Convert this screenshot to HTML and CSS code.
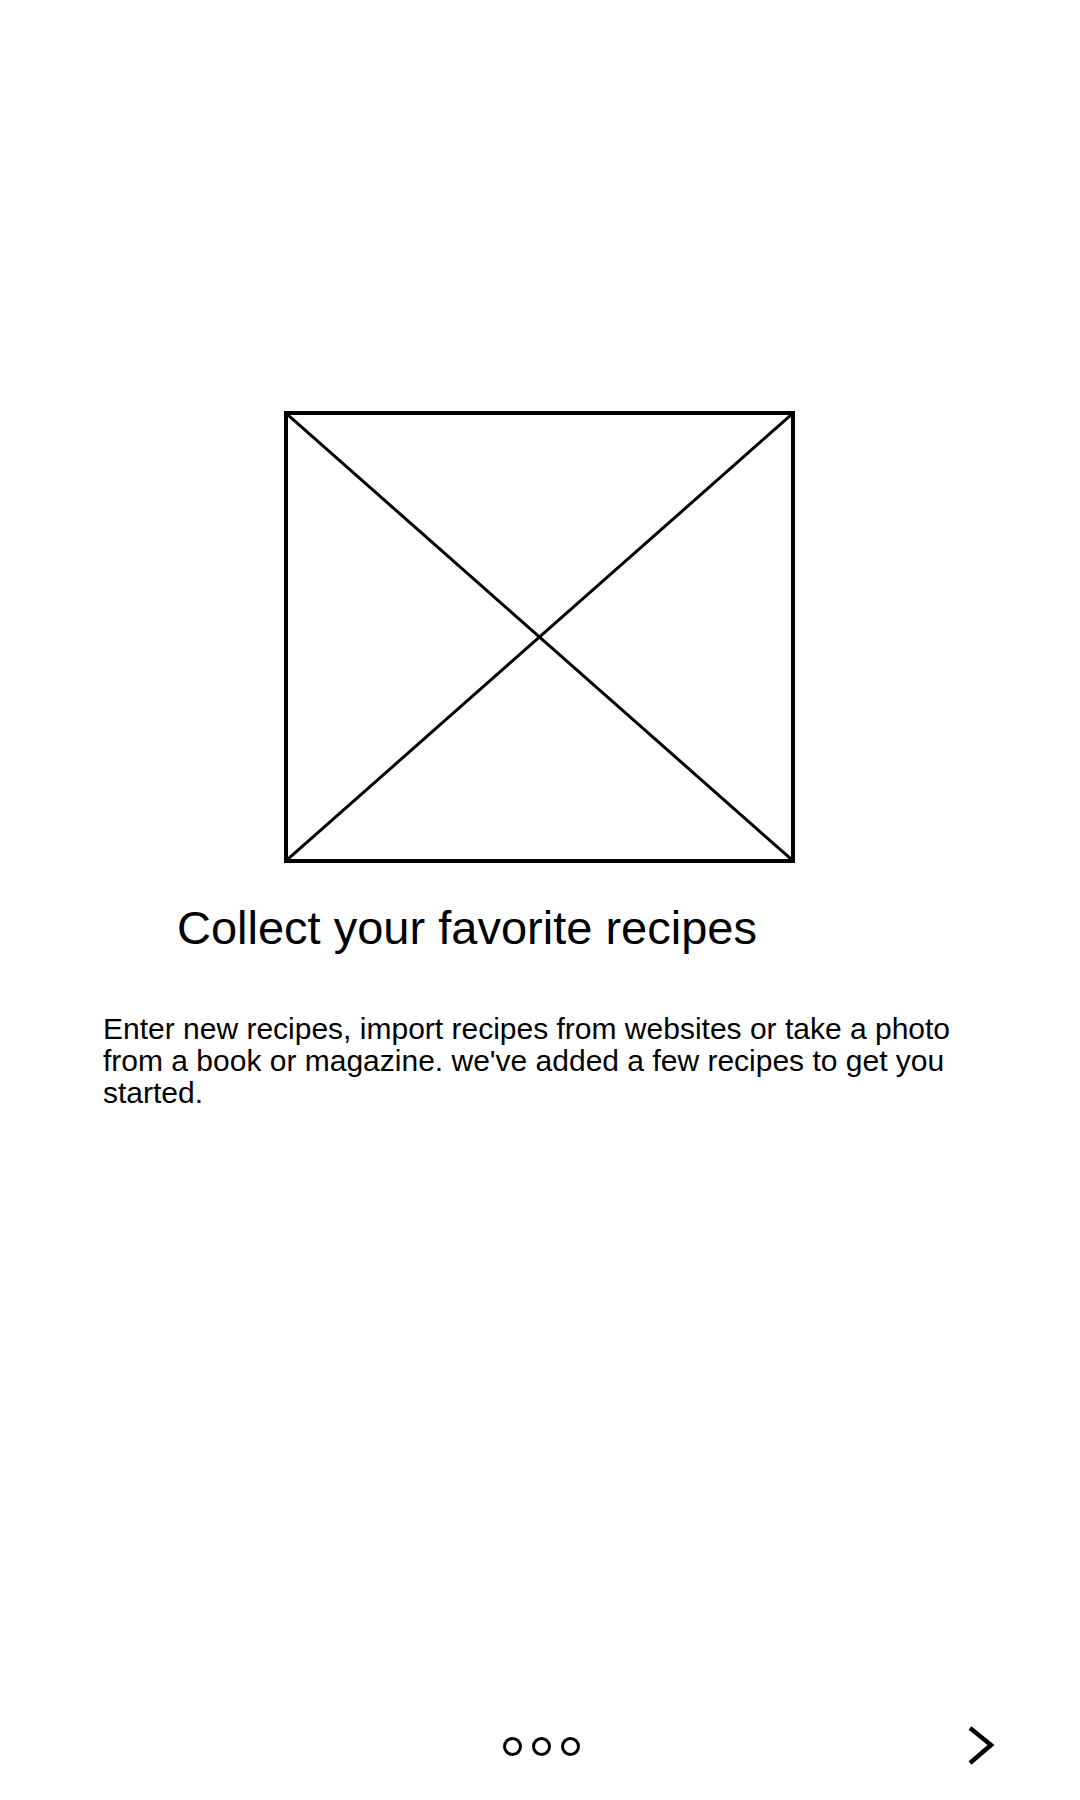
FILE: index.html
```html
<!DOCTYPE html>
<html lang="en">
<head>
<meta charset="utf-8">
<title>Collect your favorite recipes</title>
<link rel="stylesheet" href="styles.css">
</head>
<body>
<div class="screen">
  <main class="content">
    <div class="placeholder">
      <svg class="cross" viewBox="0 0 100 100" preserveAspectRatio="none" aria-hidden="true">
        <line x1="0" y1="0" x2="100" y2="100" vector-effect="non-scaling-stroke"/>
        <line x1="100" y1="0" x2="0" y2="100" vector-effect="non-scaling-stroke"/>
      </svg>
    </div>
    <h1 class="title">Collect your favorite recipes</h1>
    <p class="desc">Enter new recipes, import recipes from websites or take a photo from a book or magazine. we've added a few recipes to get you started.</p>
  </main>
  <footer class="footer">
    <div class="spacer"></div>
    <div class="dots">
      <span class="dot"></span><span class="dot"></span><span class="dot"></span>
    </div>
    <button class="next" aria-label="Next">
      <svg viewBox="0 0 30 40" width="30" height="40" aria-hidden="true">
        <polyline points="4,2 25,19 4,37" fill="none" stroke="#000" stroke-width="4.5" stroke-linejoin="miter"/>
      </svg>
    </button>
  </footer>
</div>
</body>
</html>
```

FILE: styles.css
```css
html, body {
  margin: 0;
  padding: 0;
  background: #fff;
}

body {
  font-family: "Liberation Sans", Arial, sans-serif;
  color: #000;
}

.screen {
  width: 1080px;
  height: 1800px;
  display: flex;
  flex-direction: column;
}

.content {
  padding-top: 411px;
  display: flex;
  flex-direction: column;
}

.placeholder {
  align-self: center;
  width: 511px;
  height: 452px;
  box-sizing: border-box;
  border: 4px solid #000;
  margin-left: -1px;
}

.cross {
  display: block;
  width: 100%;
  height: 100%;
}

.cross line {
  stroke: #000;
  stroke-width: 3;
}

.title {
  margin: 38px 0 0 177px;
  font-size: 47px;
  font-weight: 400;
  line-height: 54px;
}

.desc {
  margin: 58px 0 0 103px;
  width: 880px;
  font-size: 30px;
  line-height: 32px;
}

.footer {
  margin-top: auto;
  height: 74px;
  display: grid;
  grid-template-columns: 1fr auto 1fr;
  align-items: center;
  padding-bottom: 17px;
}

.dots {
  display: flex;
  gap: 10px;
  margin-left: 2px;
}

.dot {
  width: 19px;
  height: 19px;
  box-sizing: border-box;
  border: 3px solid #000;
  border-radius: 50%;
}

.next {
  justify-self: end;
  margin-right: 84px;
  padding: 0;
  border: 0;
  background: none;
  width: 30px;
  height: 40px;
}

.next svg {
  display: block;
}
```
